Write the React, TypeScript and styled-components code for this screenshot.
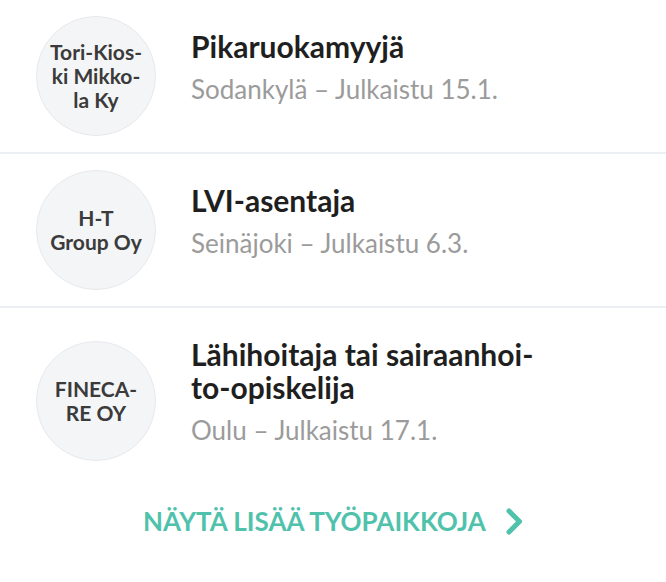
import React from "react";
import styled, { createGlobalStyle } from "styled-components";

const Global = createGlobalStyle`
  html, body { margin: 0; padding: 0; background: #ffffff; }
  body { font-family: Lato, "Noto Sans", sans-serif; -webkit-font-smoothing: antialiased; }
`;

const Page = styled.div`
  width: 666px;
  display: flex;
  flex-direction: column;
`;

const List = styled.ul`
  list-style: none;
  margin: 0;
  padding: 0;
`;

const Row = styled.li<{ $last?: boolean }>`
  display: flex;
  align-items: center;
  gap: 35px;
  padding: 16px 36px;
  border-bottom: ${(p) => (p.$last ? "none" : "2px solid #eceff3")};
`;

const Logo = styled.div`
  flex: 0 0 auto;
  width: 118px;
  height: 118px;
  border-radius: 50%;
  background: #f4f5f7;
  border: 1px solid #e7e9ec;
  display: flex;
  align-items: center;
  justify-content: center;
  text-align: center;
  font-weight: 700;
  font-size: 21px;
  line-height: 24px;
  color: #3b3b3b;
`;

const Info = styled.div`
  width: 360px;
  padding: 14px 0 27px;
`;

const Title = styled.h3`
  margin: 0;
  font-size: 30px;
  line-height: 33px;
  font-weight: 700;
  color: #1f1f1f;
`;

const Meta = styled.p`
  margin: 6px 0 0;
  font-size: 26px;
  line-height: 40px;
  color: #9b9b9b;
`;

const MoreBar = styled.div`
  display: flex;
  justify-content: center;
  padding: 12px 0 46px;
`;

const MoreLink = styled.a`
  display: inline-flex;
  align-items: center;
  gap: 20px;
  font-size: 26px;
  line-height: 32px;
  font-weight: 700;
  color: #50c2ac;
  text-decoration: none;
  text-transform: uppercase;
`;

const jobs = [
  {
    company: ["Tori-Kios-", "ki Mikko-", "la Ky"],
    title: "Pikaruokamyyjä",
    place: "Sodankylä",
    date: "15.1.",
  },
  {
    company: ["H-T", "Group Oy"],
    title: "LVI-asentaja",
    place: "Seinäjoki",
    date: "6.3.",
  },
  {
    company: ["FINECA-", "RE OY"],
    title: "Lähihoitaja tai sairaanhoi\u00ADto-opiskelija",
    place: "Oulu",
    date: "17.1.",
  },
];

const Chevron = () => (
  <svg width="17" height="27" viewBox="0 0 17 27" aria-hidden="true">
    <polyline
      points="3,3 13.5,13.5 3,24"
      fill="none"
      stroke="#50c2ac"
      strokeWidth="5"
      strokeLinecap="round"
      strokeLinejoin="round"
    />
  </svg>
);

export default function App() {
  return (
    <Page>
      <Global />
      <List>
        {jobs.map((job, i) => (
          <Row key={job.title} $last={i === jobs.length - 1}>
            <Logo>
              <span>
                {job.company.map((line, j) => (
                  <React.Fragment key={j}>
                    {j > 0 && <br />}
                    {line}
                  </React.Fragment>
                ))}
              </span>
            </Logo>
            <Info>
              <Title>{job.title}</Title>
              <Meta>
                {job.place} – Julkaistu {job.date}
              </Meta>
            </Info>
          </Row>
        ))}
      </List>
      <MoreBar>
        <MoreLink href="#">
          Näytä lisää työpaikkoja
          <Chevron />
        </MoreLink>
      </MoreBar>
    </Page>
  );
}
